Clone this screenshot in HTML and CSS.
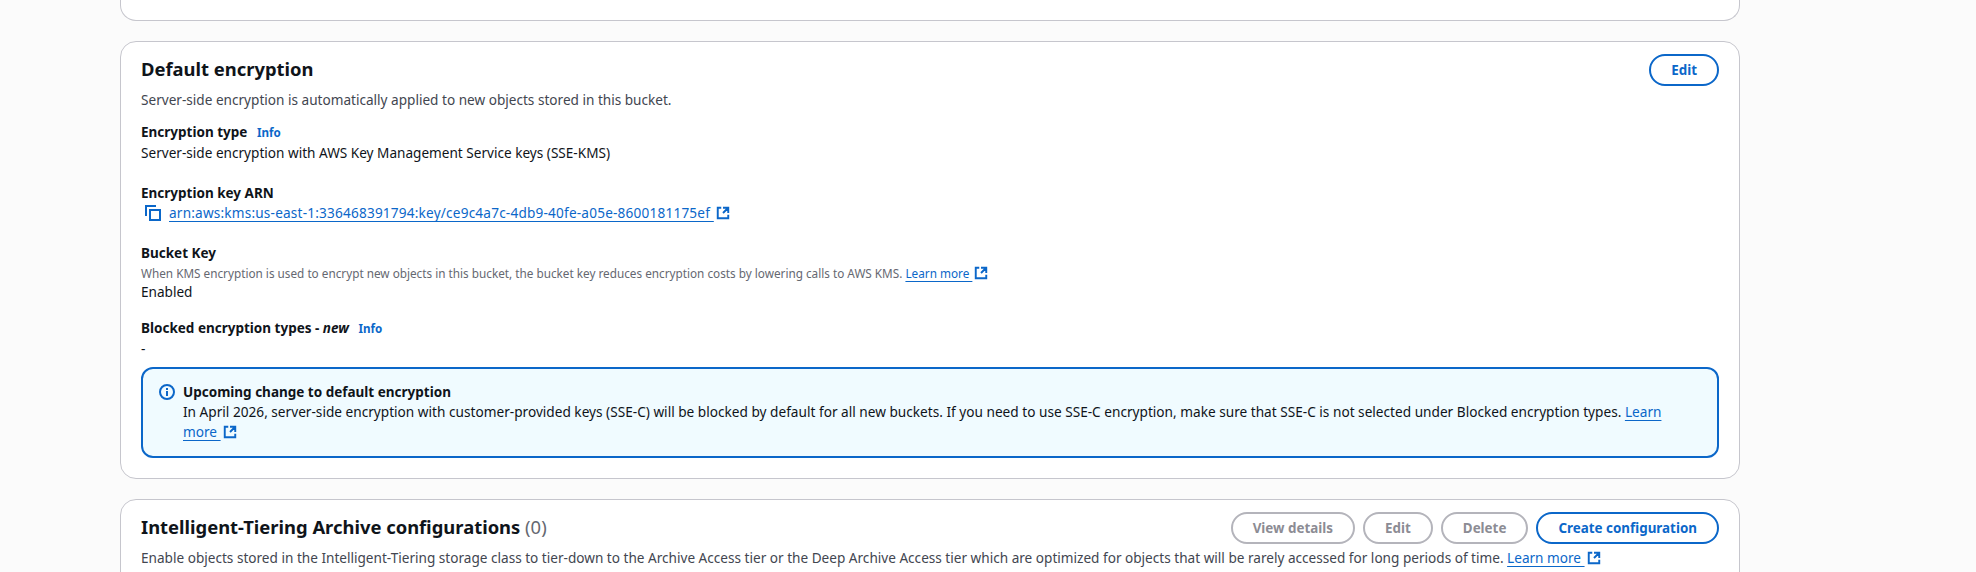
FILE: index.html
```html
<!DOCTYPE html>
<html lang="en">
<head>
<meta charset="utf-8">
<title>Bucket properties</title>
<link rel="stylesheet" href="styles.css">
</head>
<body>
<svg class="defs" width="0" height="0" aria-hidden="true">
  <symbol id="ext" viewBox="0 0 16 16"><path d="M14 8.01v-6H8M14 2 8 8.01M6 2.01H2v12h12v-3.99" fill="none" stroke="currentColor" stroke-width="2.2"/></symbol>
</svg>
<main class="page">
  <section class="card card-cut"></section>

  <section class="card">
    <header class="card-head">
      <h2 class="title">Default encryption</h2>
      <button class="btn">Edit</button>
    </header>
    <p class="desc">Server-side encryption is automatically applied to new objects stored in this bucket.</p>

    <div class="field f-first">
      <div class="label">Encryption type <a class="info">Info</a></div>
      <div class="value">Server-side encryption with AWS Key Management Service keys (SSE-KMS)</div>
    </div>

    <div class="field">
      <div class="label">Encryption key ARN</div>
      <div class="value copy">
        <svg class="icon copy-icon" viewBox="0 0 16 16"><path d="M1 11V1h10M5 5h10v10H5z" fill="none" stroke="currentColor" stroke-width="2"/></svg>
        <a class="link arn">arn:aws:kms:us-east-1:336468391794:key/ce9c4a7c-4db9-40fe-a05e-8600181175ef&nbsp;</a><svg class="ext"><use href="#ext"/></svg>
      </div>
    </div>

    <div class="field">
      <div class="label">Bucket Key</div>
      <div class="small">When KMS encryption is used to encrypt new objects in this bucket, the bucket key reduces encryption costs by lowering calls to AWS KMS. <a class="link">Learn more&nbsp;</a><svg class="ext"><use href="#ext"/></svg></div>
      <div class="value">Enabled</div>
    </div>

    <div class="field f-blocked">
      <div class="label">Blocked encryption types - <em>new</em> <a class="info">Info</a></div>
      <div class="value">-</div>
    </div>

    <div class="alert">
      <svg class="icon alert-icon" viewBox="0 0 16 16"><g fill="none" stroke="currentColor" stroke-width="2"><circle cx="8" cy="8" r="7"/><path d="M8 12V7M8 6V4"/></g></svg>
      <div class="alert-body">
        <div class="label">Upcoming change to default encryption</div>
        <div class="alert-text">In April 2026, server-side encryption with customer-provided keys (SSE-C) will be blocked by default for all new buckets. If you need to use SSE-C encryption, make sure that SSE-C is not selected under Blocked encryption types. <a class="link">Learn more&nbsp;</a><svg class="ext"><use href="#ext"/></svg></div>
      </div>
    </div>
  </section>

  <section class="card">
    <header class="card-head">
      <h2 class="title">Intelligent-Tiering Archive configurations <span class="count">(0)</span></h2>
      <div class="actions">
        <button class="btn" disabled>View details</button>
        <button class="btn" disabled>Edit</button>
        <button class="btn" disabled>Delete</button>
        <button class="btn">Create configuration</button>
      </div>
    </header>
    <p class="desc">Enable objects stored in the Intelligent-Tiering storage class to tier-down to the Archive Access tier or the Deep Archive Access tier which are optimized for objects that will be rarely accessed for long periods of time. <a class="link">Learn more&nbsp;</a><svg class="ext"><use href="#ext"/></svg></p>
  </section>
</main>
</body>
</html>
```

FILE: styles.css
```css
* { box-sizing: border-box; }
html, body { margin: 0; height: 572px; overflow: hidden; }
body {
  background: #fbfbfb;
  color: #0f141a;
  font-family: "Noto Sans", "Liberation Sans", sans-serif;
  font-size: 13.6px;
  line-height: 20px;
}
.defs { position: absolute; }
.page {
  width: 1620px;
  margin-left: 120px;
  display: flex;
  flex-direction: column;
  gap: 20px;
}
.card {
  background: #fff;
  border: 1px solid #c6c6cd;
  border-radius: 16px;
  padding: 12px 20px 20px;
}
.card-cut {
  height: 21px;
  padding: 0;
  border-top: 0;
  border-radius: 0 0 16px 16px;
}
.card-head {
  display: flex;
  align-items: flex-start;
  justify-content: space-between;
  height: 32px;
}
.title {
  margin: 3px 0 0;
  font-size: 18.4px;
  line-height: 24px;
  font-weight: 700;
}
.count { font-weight: 400; color: #656871; }
.desc { margin: 4px 0 0; color: #424650; }
.actions { display: flex; gap: 8px; }
.btn {
  height: 32px;
  padding: 0 20px;
  background: #fff;
  border: 2px solid #0b67c9;
  border-radius: 20px;
  color: #0b67c9;
  font: 700 13.4px/20px "Noto Sans", "Liberation Sans", sans-serif;
}
.btn:disabled {
  border-color: #b4b4bb;
  color: #8c8c94;
}
.field { margin-top: 20px; }
.f-first { margin-top: 12px; }
.f-blocked { margin-top: 16px; }
.label { font-weight: 700; font-size: 13.5px; }
.label em { font-style: italic; }
.info {
  margin-left: 6px;
  color: #0b67c9;
  font-size: 11.6px;
  font-weight: 700;
}
.small {
  margin: 2px 0 1px;
  font-size: 11.75px;
  line-height: 16px;
  color: #656871;
}
.link {
  color: #0b67c9;
  text-decoration: underline;
  text-underline-offset: 3px;
}
.arn { letter-spacing: 0.2px; }
.icon { display: block; flex: none; width: 16px; height: 16px; color: #0b67c9; }
.ext {
  display: inline-block;
  width: 14px;
  height: 14px;
  margin-left: 2px;
  vertical-align: -2px;
  color: #0b67c9;
}
.copy { display: flex; align-items: center; }
.copy-icon { margin: 0 8px 0 4px; }
.alert {
  display: flex;
  gap: 8px;
  margin-top: 8px;
  padding: 13px 36px 13px 16px;
  height: 91px;
  background: #f0fbff;
  border: 2px solid #0b67c9;
  border-radius: 12px;
}
.alert-icon { margin-top: 2px; }
.alert-text { font-size: 13.65px; }
```
